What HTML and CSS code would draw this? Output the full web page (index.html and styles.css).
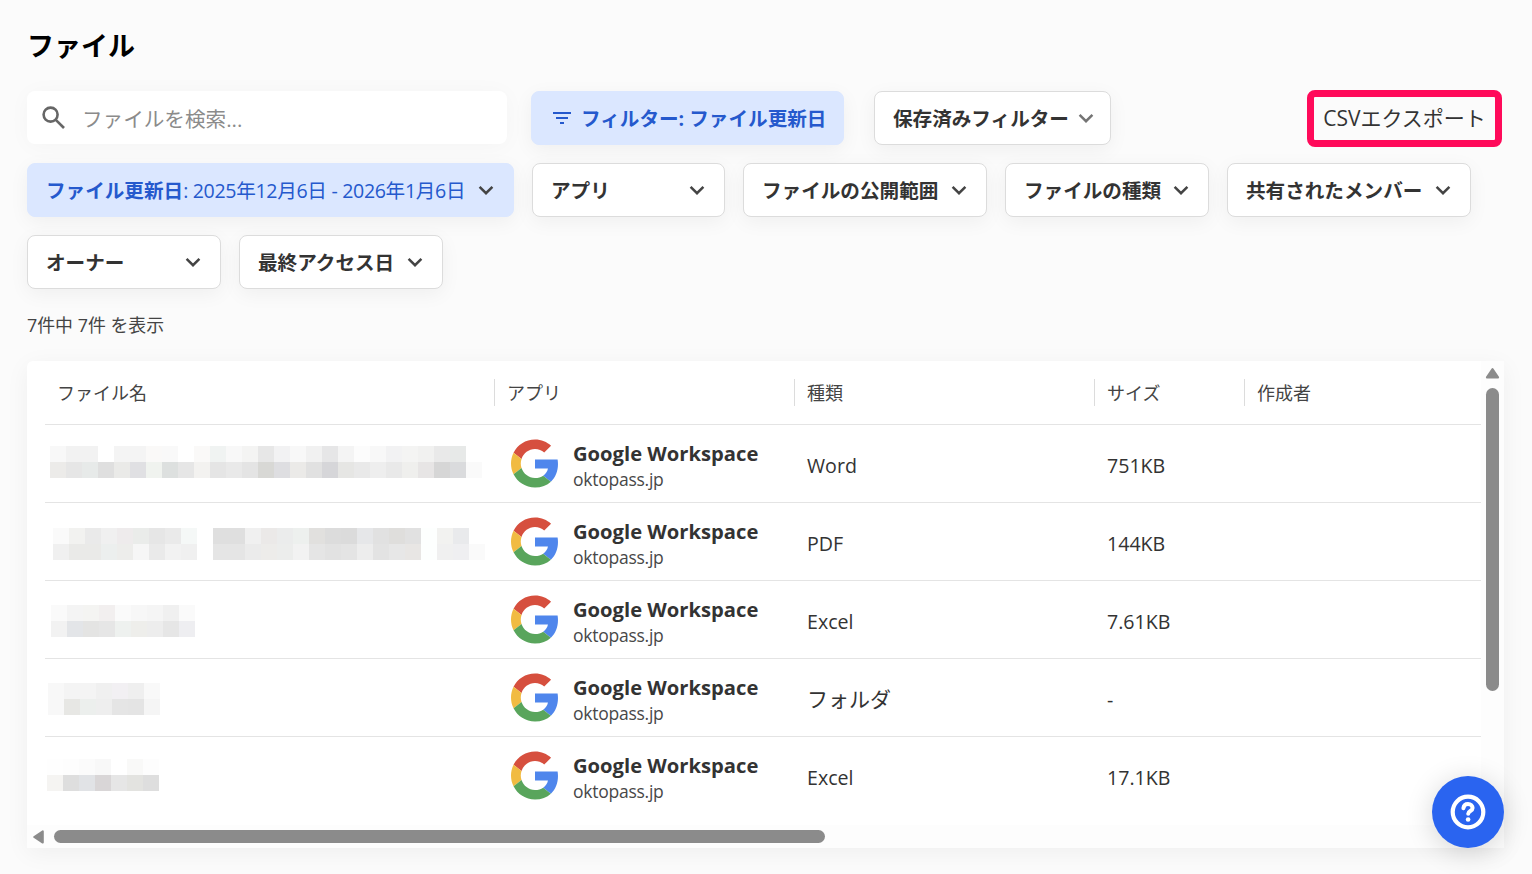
FILE: index.html
```html
<!DOCTYPE html>
<html lang="ja">
<head>
    <meta charset="UTF-8">
    <meta name="viewport" content="width=device-width, initial-scale=1.0">
    <title>ファイル</title>
    <link rel="stylesheet" href="styles.css">
</head>
<body>
    <svg width="0" height="0" class="symbols">
        <symbol id="chevron" viewBox="0 0 16 16">
            <path d="M1.6 4.8 L8 11.2 L14.4 4.8" fill="none" stroke="currentColor" stroke-width="2.5"/>
        </symbol>
        <symbol id="google" viewBox="0 0 48 48">
            <path fill="#d64f3e" d="M24 9.5c3.54 0 6.71 1.22 9.21 3.6l6.85-6.85C35.9 2.38 30.47 0 24 0 14.62 0 6.51 5.38 2.56 13.22l7.98 6.19C12.43 13.72 17.74 9.5 24 9.5z"/>
            <path fill="#4f86ec" d="M46.98 24.55c0-1.57-.15-3.09-.38-4.55H24v9.02h12.94c-.58 2.96-2.26 5.48-4.78 7.18l7.73 6c4.51-4.18 7.09-10.36 7.09-17.65z"/>
            <path fill="#f1bb42" d="M10.53 28.59c-.48-1.45-.76-2.99-.76-4.59s.27-3.14.76-4.59l-7.98-6.19C.92 16.46 0 20.12 0 24c0 3.88.92 7.54 2.56 10.78l7.97-6.19z"/>
            <path fill="#59a55c" d="M24 48c6.48 0 11.93-2.13 15.89-5.81l-7.73-6c-2.15 1.45-4.92 2.3-8.16 2.3-6.26 0-11.57-4.22-13.47-9.91l-7.98 6.19C6.51 42.62 14.62 48 24 48z"/>
        </symbol>
    </svg>

    <main class="page">
        <h1>ファイル</h1>

        <div class="toolbar">
            <div class="search">
                <svg class="search-icon" viewBox="0 0 24 24"><circle cx="8.6" cy="8.6" r="7"/><path d="M13.8 13.8 L22 22"/></svg>
                <span>ファイルを検索...</span>
            </div>
            <button class="btn active filter">
                <svg class="filter-icon" viewBox="0 0 18 12"><path d="M0 1h18M3 6h12M7 11h4"/></svg>
                <span>フィルター: ファイル更新日</span>
            </button>
            <button class="btn saved"><span>保存済みフィルター</span><svg class="chevron"><use href="#chevron"/></svg></button>
            <button class="export">CSVエクスポート</button>
        </div>

        <div class="filters">
            <button class="btn active w-date"><span>ファイル更新日<span class="value">: 2025年12月6日 - 2026年1月6日</span></span><svg class="chevron"><use href="#chevron"/></svg></button>
            <button class="btn w-app"><span>アプリ</span><svg class="chevron"><use href="#chevron"/></svg></button>
            <button class="btn w-large"><span>ファイルの公開範囲</span><svg class="chevron"><use href="#chevron"/></svg></button>
            <button class="btn w-medium"><span>ファイルの種類</span><svg class="chevron"><use href="#chevron"/></svg></button>
            <button class="btn w-large"><span>共有されたメンバー</span><svg class="chevron"><use href="#chevron"/></svg></button>
            <button class="btn w-owner"><span>オーナー</span><svg class="chevron"><use href="#chevron"/></svg></button>
            <button class="btn w-medium"><span>最終アクセス日</span><svg class="chevron"><use href="#chevron"/></svg></button>
        </div>

        <p class="count">7件中 7件 を表示</p>

        <div class="card">
            <div class="table">
                <div class="row head">
                    <div class="cell">ファイル名</div>
                    <div class="cell">アプリ</div>
                    <div class="cell">種類</div>
                    <div class="cell">サイズ</div>
                    <div class="cell">作成者</div>
                </div>
                <div id="rows"></div>
            </div>
            <div class="scroll-y">
                <svg class="arrow-up" viewBox="0 0 14 12"><path d="M7 2 L12.6 10.4 H1.4 Z"/></svg>
                <div class="thumb"></div>
            </div>
            <div class="scroll-x">
                <svg class="arrow-left" viewBox="0 0 11 14"><path d="M1.2 7 L9.8 1.4 V12.6 Z"/></svg>
                <div class="thumb"></div>
            </div>
        </div>
    </main>

    <button class="help">
        <svg viewBox="0 0 36 36">
            <circle cx="18" cy="18" r="15.3" stroke-width="4.2"/>
            <path d="M13.4 14.2 C13.8 11.4 15.7 10 18 10 C20.8 10 22.6 11.8 22.6 14 C22.6 17.2 18.2 16.9 18.2 19.8" stroke-width="4" stroke-linecap="round"/>
            <circle class="dot" cx="18.1" cy="25.5" r="2.3"/>
        </svg>
    </button>

    <script src="script.js"></script>
</body>
</html>
```
FILE: styles.css
```css
* {
    box-sizing: border-box;
}

body {
    font-family: "Open Sans", "Noto Sans CJK JP", sans-serif;
    background-color: #fbfbfb;
    color: #333;
    margin: 0;
    height: 874px;
    overflow: hidden;
}

button {
    font-family: inherit;
    color: inherit;
    cursor: pointer;
}

.symbols {
    position: absolute;
}

.page {
    padding: 26px 27px 0 27px;
}

h1 {
    margin: 0 0 25px;
    color: #000;
    font-size: 27px;
    line-height: 40px;
    font-weight: bold;
}

.toolbar {
    display: flex;
    align-items: flex-start;
    height: 54px;
    margin-bottom: 18px;
}

.search {
    display: flex;
    align-items: center;
    gap: 16px;
    width: 480px;
    height: 53px;
    padding-left: 15px;
    border-radius: 8px;
    background-color: #fff;
    color: #8b8b8b;
    font-size: 20.6px;
    box-shadow: 0 2px 22px rgba(0, 0, 0, 0.03);
}

.search-icon {
    width: 24px;
    height: 24px;
    fill: none;
    stroke: #666;
    stroke-width: 2.6;
}

.btn {
    display: flex;
    align-items: center;
    justify-content: space-between;
    height: 54px;
    padding: 0 19px 0 18px;
    border: 1px solid #dcdcdc;
    border-radius: 8px;
    background-color: #fff;
    font-size: 19.6px;
    font-weight: bold;
    white-space: nowrap;
    box-shadow: 0 5px 20px rgba(0, 0, 0, 0.05);
}

.btn > span {
    padding-bottom: 2px;
}

.btn.active {
    border-color: #dbe7ff;
    background-color: #dbe7ff;
    color: #2559cd;
}

.filter {
    justify-content: flex-start;
    gap: 10px;
    width: 313px;
    margin-left: 24px;
    padding: 0 0 0 21px;
}

.filter-icon {
    flex: none;
    width: 18px;
    height: 12px;
    fill: none;
    stroke: currentColor;
    stroke-width: 2;
}

.saved {
    width: 237px;
    margin-left: 30px;
    padding-right: 16px;
}

.saved .chevron {
    color: #747474;
}

.export {
    width: 195px;
    height: 57px;
    margin: -1px 3px 0 auto;
    padding: 0 0 3px;
    border: 7px solid #ff0a5a;
    border-radius: 8px;
    background: none;
    font-size: 21px;
    white-space: nowrap;
}

.chevron {
    width: 16px;
    height: 16px;
    flex: none;
    color: #444;
}

.filters {
    display: flex;
    flex-wrap: wrap;
    gap: 18px;
}

.w-date {
    width: 487px;
}

.w-app {
    width: 193px;
}

.w-large {
    width: 244px;
}

.w-medium {
    width: 204px;
}

.w-owner {
    width: 194px;
}

.value {
    font-weight: normal;
    letter-spacing: -0.33px;
}

.count {
    margin: 23px 0 23px;
    font-size: 17.9px;
    line-height: 26px;
    color: #444;
}

.card {
    display: grid;
    grid-template-columns: 1454px 23px;
    grid-template-rows: 464px 23px;
    width: 1477px;
    border-radius: 6px 0 0 0;
    background-color: #fff;
    box-shadow: 0 5px 25px rgba(0, 0, 0, 0.05);
}

.table {
    padding-left: 18px;
    overflow: hidden;
}

.row {
    display: grid;
    grid-template-columns: 450px 300px 300px 150px 1fr;
    height: 78px;
    border-bottom: 1px solid #e4e4e4;
    font-size: 19.6px;
}

#rows .row:last-child {
    border-bottom-color: transparent;
}

.cell {
    display: flex;
    align-items: center;
    padding: 3px 0 0 12px;
}

.cell.kana {
    padding-top: 0;
    font-size: 21px;
}

.row.head {
    height: 64px;
    align-items: center;
    color: #444;
    font-size: 18px;
}

.head .cell {
    height: 27px;
    padding-top: 0;
    padding-bottom: 2px;
    margin-left: -1px;
    border-left: 1px solid #dcdcdc;
}

.head .cell:first-child {
    border-left: 0;
    padding-left: 13px;
}

.mosaic {
    display: grid;
    grid-auto-rows: 16px;
    align-self: start;
}

.app {
    gap: 14px;
    padding-top: 0;
    padding-left: 16px;
}

.app svg {
    width: 48px;
    height: 49px;
}

.app-text {
    padding-top: 5px;
}

.app-name {
    font-size: 20.2px;
    line-height: 26px;
    font-weight: bold;
}

.app-domain {
    font-size: 17.5px;
    line-height: 26px;
    letter-spacing: -0.25px;
    color: #484848;
}

.thumb {
    border-radius: 7px;
    background-color: #8b8b8b;
}

.scroll-y,
.scroll-x {
    display: flex;
    align-items: center;
    background-color: #fdfdfd;
}

.scroll-y {
    flex-direction: column;
    padding-top: 6px;
}

.scroll-x {
    grid-column: 1 / 3;
    padding-left: 6px;
}

.scroll-y .thumb {
    width: 13px;
    height: 303px;
    margin-top: 9px;
}

.scroll-x .thumb {
    width: 771px;
    height: 13px;
    margin-left: 10px;
}

.arrow-up,
.arrow-left {
    flex: none;
    fill: #8b8b8b;
    stroke: #8b8b8b;
    stroke-width: 2;
    stroke-linejoin: round;
}

.arrow-up {
    width: 15px;
    height: 12px;
}

.arrow-left {
    width: 11px;
    height: 14px;
}

.help {
    position: fixed;
    right: 28px;
    bottom: 26px;
    display: flex;
    align-items: center;
    justify-content: center;
    width: 72px;
    height: 72px;
    padding: 0;
    border: 0;
    border-radius: 50%;
    background-color: #2a64f0;
    box-shadow: 0 4px 28px rgba(0, 0, 0, 0.16);
}

.help svg {
    width: 36px;
    height: 36px;
    fill: none;
    stroke: #fff;
}

.help .dot {
    fill: #fff;
    stroke: none;
}
```
FILE: script.js
```js
// masked file names: two lines of 16px blocks, x/y is the offset in the cell
var files = [
    {
        type: "Word", size: "751KB", x: 5, y: 21,
        mask: [
            "f8f8f8 f2f2f2 f2f2f2 ffffff f4f4f4 f4f4f4 faf9f8 f9f9f9 ffffff faf9f8 f0f3f2 f8f8f8 f4f4f3 e7e7e7 f2f2f3 f8f8f8 f1f1f1 e6e6e7 f4f4f4 fcfcfc f8f8f8 f2f2f3 f4f4f3 f1f1f0 e9e9e9 e7e9e8 ffffff",
            "ecebe9 e6e6e6 e7eae9 dfdfdf eaeae8 e0e0e3 f0f3ef dde0df e6e6e6 f3f2f0 e5e5e5 e9e9e9 e4e4e4 d8d8d5 dedee1 ebeae8 e1e1e1 d6d6d9 e6e6e4 e9e9e9 eeeeee e9e9e9 efefed e7e5e5 d6d6d6 dadbdd fafafa"
        ]
    },
    {
        type: "PDF", size: "144KB", x: 8, y: 25,
        mask: [
            "fafafa f2f2f0 eaeaea f0f0f0 eeebec eaecea e6e6e6 eaeaea f5f8f7 ffffff dfdfdf dfdfdf f0f0f0 ebe9e8 ebecec edf0ee e1e0de dcdcdc dbdbdb e6e7e9 e1e1e1 dfdedc e1e1e1 fdfffe f2f2f0 e9eaec ffffff",
            "f0f0f0 eaeae8 eaeae8 ecefee ededeb f6f6f6 eaeaea f2f2f2 f0f0f0 ffffff e5e5e5 e5e5e5 ebebeb edecea ecedec f2f2f2 e5e5e5 e2e2e2 e4e4e4 ededed e3e3e3 e7e7e7 e8e6e4 fdfffe f0f0f0 efeff1 fafafa"
        ]
    },
    {
        type: "Excel", size: "7.61KB", x: 6, y: 24,
        mask: [
            "fafafa f4f4f4 f4f4f2 f2efef fafafa f7f7f7 f5f5f5 f0f0f0 fafafa",
            "f2f2f2 e3e5e8 e4e4e3 e6e6e6 eef1ef eeeeeb ededed e6e6e6 eeeef1"
        ]
    },
    {
        type: "フォルダ", size: "-", x: 3, y: 24, kana: true,
        mask: [
            "f8f8f8 f4f4f4 f4f4f4 f0f0f0 f2f0f3 efefef f9f9f9",
            "f8f8f8 e7e7e4 ecefed eeeeee e5e5e5 e4e4e4 f5f5f5"
        ]
    },
    {
        type: "Excel", size: "17.1KB", x: 2, y: 22,
        mask: [
            "fefefe fdfdfd fbfbfb f8f8f8 ffffff f9f9f8 fdfdfd",
            "f5f4f2 dedede e1e3e6 d9d6d7 e6e6e6 e3e3e0 dedede"
        ]
    }
];

var html = "";

files.forEach(function (file) {
    var colors = file.mask.join(" ").split(" ");
    var columns = file.mask[0].split(" ").length;
    var blocks = colors.map(function (color) {
        return '<i style="background:#' + color + '"></i>';
    }).join("");

    html += '<div class="row">' +
        '<div class="mosaic" style="grid-template-columns:repeat(' + columns + ',16px);margin:' + file.y + 'px 0 0 ' + file.x + 'px">' + blocks + '</div>' +
        '<div class="cell app"><svg><use href="#google"/></svg>' +
        '<div class="app-text"><div class="app-name">Google Workspace</div><div class="app-domain">oktopass.jp</div></div></div>' +
        '<div class="cell' + (file.kana ? ' kana' : '') + '">' + file.type + '</div>' +
        '<div class="cell">' + file.size + '</div>' +
        '<div class="cell"></div>' +
        '</div>';
});

document.getElementById("rows").innerHTML = html;
```
